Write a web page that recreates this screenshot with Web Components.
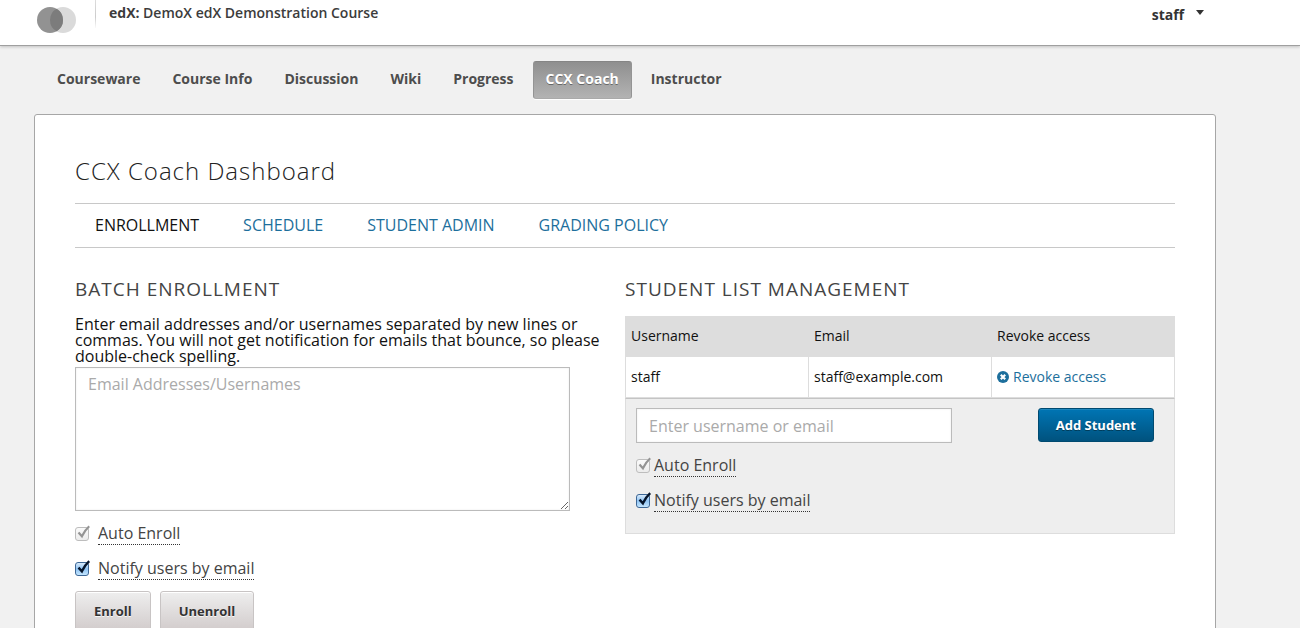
<!DOCTYPE html>
<html lang="en">
<head>
<meta charset="utf-8">
<meta name="viewport" content="width=device-width, initial-scale=1">
<title>CCX Coach Dashboard</title>
<style>
  :root {
    --ink: #3c3c3c;
    --link: #1d6f9c;
    --rule: #c8c8c8;
  }
  html { background: #f1f1f1; scrollbar-width: none; }
  body { margin: 0; font-family: "Open Sans", "Noto Sans", sans-serif; font-size: 16px; color: #111; }
</style>
</head>
<body>
<ccx-page></ccx-page>

<script>
const define = (name, html, setup) => {
  const template = document.createElement('template');
  template.innerHTML = '<style>*, *::before, *::after { box-sizing: border-box; }</style>' + html;
  customElements.define(name, class extends HTMLElement {
    constructor() {
      super();
      this.attachShadow({ mode: 'open' }).append(template.content.cloneNode(true));
    }
    connectedCallback() { if (setup) setup(this, this.shadowRoot); }
  });
};

/* A tick box with its dotted-underlined label */
define('check-option', `
  <style>
    :host { display: flex; align-items: center; gap: var(--check-gap, 8px); height: 35px; }
    .tick { display: grid; width: 15px; height: 16px; flex: none; margin-bottom: 2px; }
    .tick > * { grid-area: 1 / 1; }
    input { appearance: none; align-self: end; margin: 0; width: 14px; height: 14px; border: 1px solid #3d6796; border-radius: 3px;
      background: linear-gradient(#d9ebfb, #8fc3f3 50%, #c4e6ff); }
    input:disabled { border-color: #bdbdbd; background: linear-gradient(#fafafa, #ececec); }
    svg { width: 15px; height: 16px; pointer-events: none; fill: none; stroke: #06152b; stroke-width: 2.4; }
    input:disabled + svg { stroke: #949494; stroke-width: 2.2; }
    input:not(:checked) + svg { visibility: hidden; }
    label { line-height: 22px; color: #444; border-bottom: 1px dotted #333; }
  </style>
  <span class="tick">
    <input type="checkbox" id="box" checked>
    <svg viewBox="0 0 15 16" aria-hidden="true"><path d="M3.5 7.6 L6.9 11.3 Q9.7 5.3 14.2 1.2"/></svg>
  </span>
  <label for="box"><slot></slot></label>`,
  (host, root) => { root.querySelector('input').disabled = host.hasAttribute('locked'); });

/* Push button, grey by default, blue with the primary attribute */
define('push-button', `
  <style>
    :host { display: block; }
    button { display: block; height: 40px; padding: 0 18px; border: 1px solid #c8c4c4; border-radius: 3px;
      font: bold 13px/20px "Open Sans", "Noto Sans", sans-serif; color: #333; text-shadow: 0 1px 0 #f8f8f8;
      background: linear-gradient(#eeeeee, #d2cccc); box-shadow: inset 0 1px 0 #fff; }
    :host([primary]) button { height: 34px; padding: 0 17px; color: #fff; border-color: #004a70;
      text-shadow: 0 1px 0 #003d5c; background: linear-gradient(#0075b4, #00527e); box-shadow: inset 0 1px 0 #1b86bd; }
  </style>
  <button type="button"><slot></slot></button>`);

define('site-header', `
  <style>
    :host { display: block; background: #fff; border-bottom: 1px solid #9f9f9f; box-shadow: 0 1px 3px #00000033; position: relative; }
    header { display: flex; align-items: flex-start; height: 45px; padding: 0 96px 0 36px; font-size: 14px; line-height: 20px; color: var(--ink); }
    .logo { display: block; margin-top: 6px; width: 41px; height: 28px; }
    .logo svg { display: block; }
    h1 { margin: 0 0 0 18px; padding: 3px 0 5px 13px; border-left: 1px solid; border-image: linear-gradient(#ddd, #ccc 60%, #fff) 1; font-size: 14px; font-weight: 600; }
    h1 b { font-weight: 700; }
    .user { display: flex; align-items: center; gap: 12px; margin: 5px 0 0 auto; color: #333; font-weight: 700; text-decoration: none; }
    .user svg { margin-top: -5px; }
  </style>
  <header>
    <a class="logo" href="#" aria-label="Home"><svg width="41" height="28" viewBox="0 0 41 28">
      <circle cx="27" cy="14" r="13" fill="#dadada"/><circle cx="14" cy="14" r="13" fill="#929292"/>
      <path d="M20.5 2.74a13 13 0 0 1 0 22.52a13 13 0 0 1 0-22.52z" fill="#7c7c7c"/></svg></a>
    <h1><b>edX:</b> DemoX edX Demonstration Course</h1>
    <a class="user" href="#">staff <svg width="8" height="5" viewBox="0 0 8 5" aria-hidden="true"><path d="M0 0h8L4 5z" fill="#333"/></svg></a>
  </header>`);

define('course-nav', `
  <style>
    nav { display: flex; flex-wrap: wrap; gap: 6px; padding: 15px 10px; }
    a { padding: 7px 12px 9px; border: 1px solid transparent; border-radius: 3px; font-size: 14px; line-height: 20px;
      font-weight: 700; color: #4d4d4d; text-decoration: none; }
    a[aria-current] { color: #fff; border-color: #858585 #949494 #aaa; text-shadow: 0 1px 0 #00000066;
      background: linear-gradient(#8f8f8f, #b3b3b3); box-shadow: 0 1px 0 #fff; }
    :host { display: block; }
  </style>
  <nav>
    <a href="#">Courseware</a><a href="#">Course Info</a><a href="#">Discussion</a><a href="#">Wiki</a>
    <a href="#">Progress</a><a href="#" aria-current="page">CCX Coach</a><a href="#">Instructor</a>
  </nav>`);

define('section-tabs', `
  <style>
    :host { display: block; border: solid var(--rule); border-width: 1px 0; }
    nav { display: flex; flex-wrap: wrap; gap: 0 44px; padding: 10px 20px 11px; }
    a { line-height: 22px; color: var(--link); text-decoration: none; text-transform: uppercase; }
    a[aria-current] { color: #111; }
  </style>
  <nav><a href="#" aria-current="page">Enrollment</a><a href="#">Schedule</a><a href="#">Student Admin</a><a href="#">Grading Policy</a></nav>`);

const field = `
    h2 { margin: 0 0 15px; font-size: 19px; line-height: 24px; font-weight: 400; letter-spacing: 1px; color: #444; text-transform: uppercase; }
    textarea, input { display: block; margin: 0; border: 1px solid #bbb; border-radius: 0; background: #fff; color: #333;
      font: 16px/20px "Open Sans", "Noto Sans", sans-serif; box-shadow: inset 0 0 2px #0000001a; }
    ::placeholder { color: #aaa; opacity: 1; }`;

define('batch-enrollment', `
  <style>${field}
    :host { display: block; }
    p { margin: 0 0 3px; line-height: 16px; padding-right: 20px; }
    textarea { width: 90%; height: 144px; padding: 6px 12px; }
    .options { padding: 5px 0 3px; }
    .actions { display: flex; gap: 9px; margin-top: 2px; }
  </style>
  <h2>Batch Enrollment</h2>
  <p id="help">Enter email addresses and/or usernames separated by new lines or commas. You will not get notification for emails that bounce, so please double-check spelling.</p>
  <textarea aria-labelledby="help" placeholder="Email Addresses/Usernames"></textarea>
  <div class="options">
    <check-option locked>Auto Enroll</check-option>
    <check-option>Notify users by email</check-option>
  </div>
  <div class="actions"><push-button>Enroll</push-button><push-button>Unenroll</push-button></div>`);

define('student-list', `
  <style>${field}
    :host { display: block; }
    table { width: 100%; border-collapse: collapse; table-layout: fixed; font-size: 14px; line-height: 20px; }
    th, td { padding: 9px 5px 10px; text-align: left; font-weight: 400; border: 1px solid #ddd; }
    td { padding-top: 10px; }
    th { background: #ddd; }
    td a { display: flex; align-items: center; gap: 4px; color: var(--link); text-decoration: none; }
    form { padding: 9px 20px 15px 10px; background: #eee; border: 1px solid #ddd; border-top-color: #c4c4c4; }
    .add { display: flex; justify-content: space-between; align-items: flex-start; margin-bottom: 5px; }
    input { width: 61%; height: 35px; padding: 0 12px; }
    check-option { --check-gap: 3px; }
  </style>
  <h2>Student List Management</h2>
  <table>
    <thead><tr><th>Username</th><th>Email</th><th>Revoke access</th></tr></thead>
    <tbody><tr><td>staff</td><td>staff@example.com</td><td><a href="#">
      <svg width="12" height="12" viewBox="0 0 12 12" aria-hidden="true"><circle cx="6" cy="6" r="6" fill="#1d6f9c"/><path d="M3.8 3.8l4.4 4.4M8.2 3.8l-4.4 4.4" stroke="#fff" stroke-width="2.2"/></svg>Revoke access</a></td></tr></tbody>
  </table>
  <form>
    <div class="add">
      <input type="text" aria-label="Username or email" placeholder="Enter username or email">
      <push-button primary>Add Student</push-button>
    </div>
    <check-option locked>Auto Enroll</check-option>
    <check-option>Notify users by email</check-option>
  </form>`);

define('coach-dashboard', `
  <style>
    :host { display: block; background: #fff; border: 1px solid #a6a6a6; border-radius: 3px; padding: 40px; }
    h1 { margin: 0 0 16px; font-size: 24px; line-height: 32px; font-weight: 300; letter-spacing: 1px; color: #222; }
    .columns { display: grid; grid-template-columns: 1fr 1fr; padding-top: 29px; }
  </style>
  <h1>CCX Coach Dashboard</h1>
  <section-tabs></section-tabs>
  <div class="columns"><batch-enrollment></batch-enrollment><student-list></student-list></div>`);

define('ccx-page', `
  <style>
    :host { display: block; }
    main { padding: 0 84px 0 34px; }
  </style>
  <site-header></site-header>
  <main><course-nav></course-nav><coach-dashboard></coach-dashboard></main>`);
</script>
</body>
</html>
